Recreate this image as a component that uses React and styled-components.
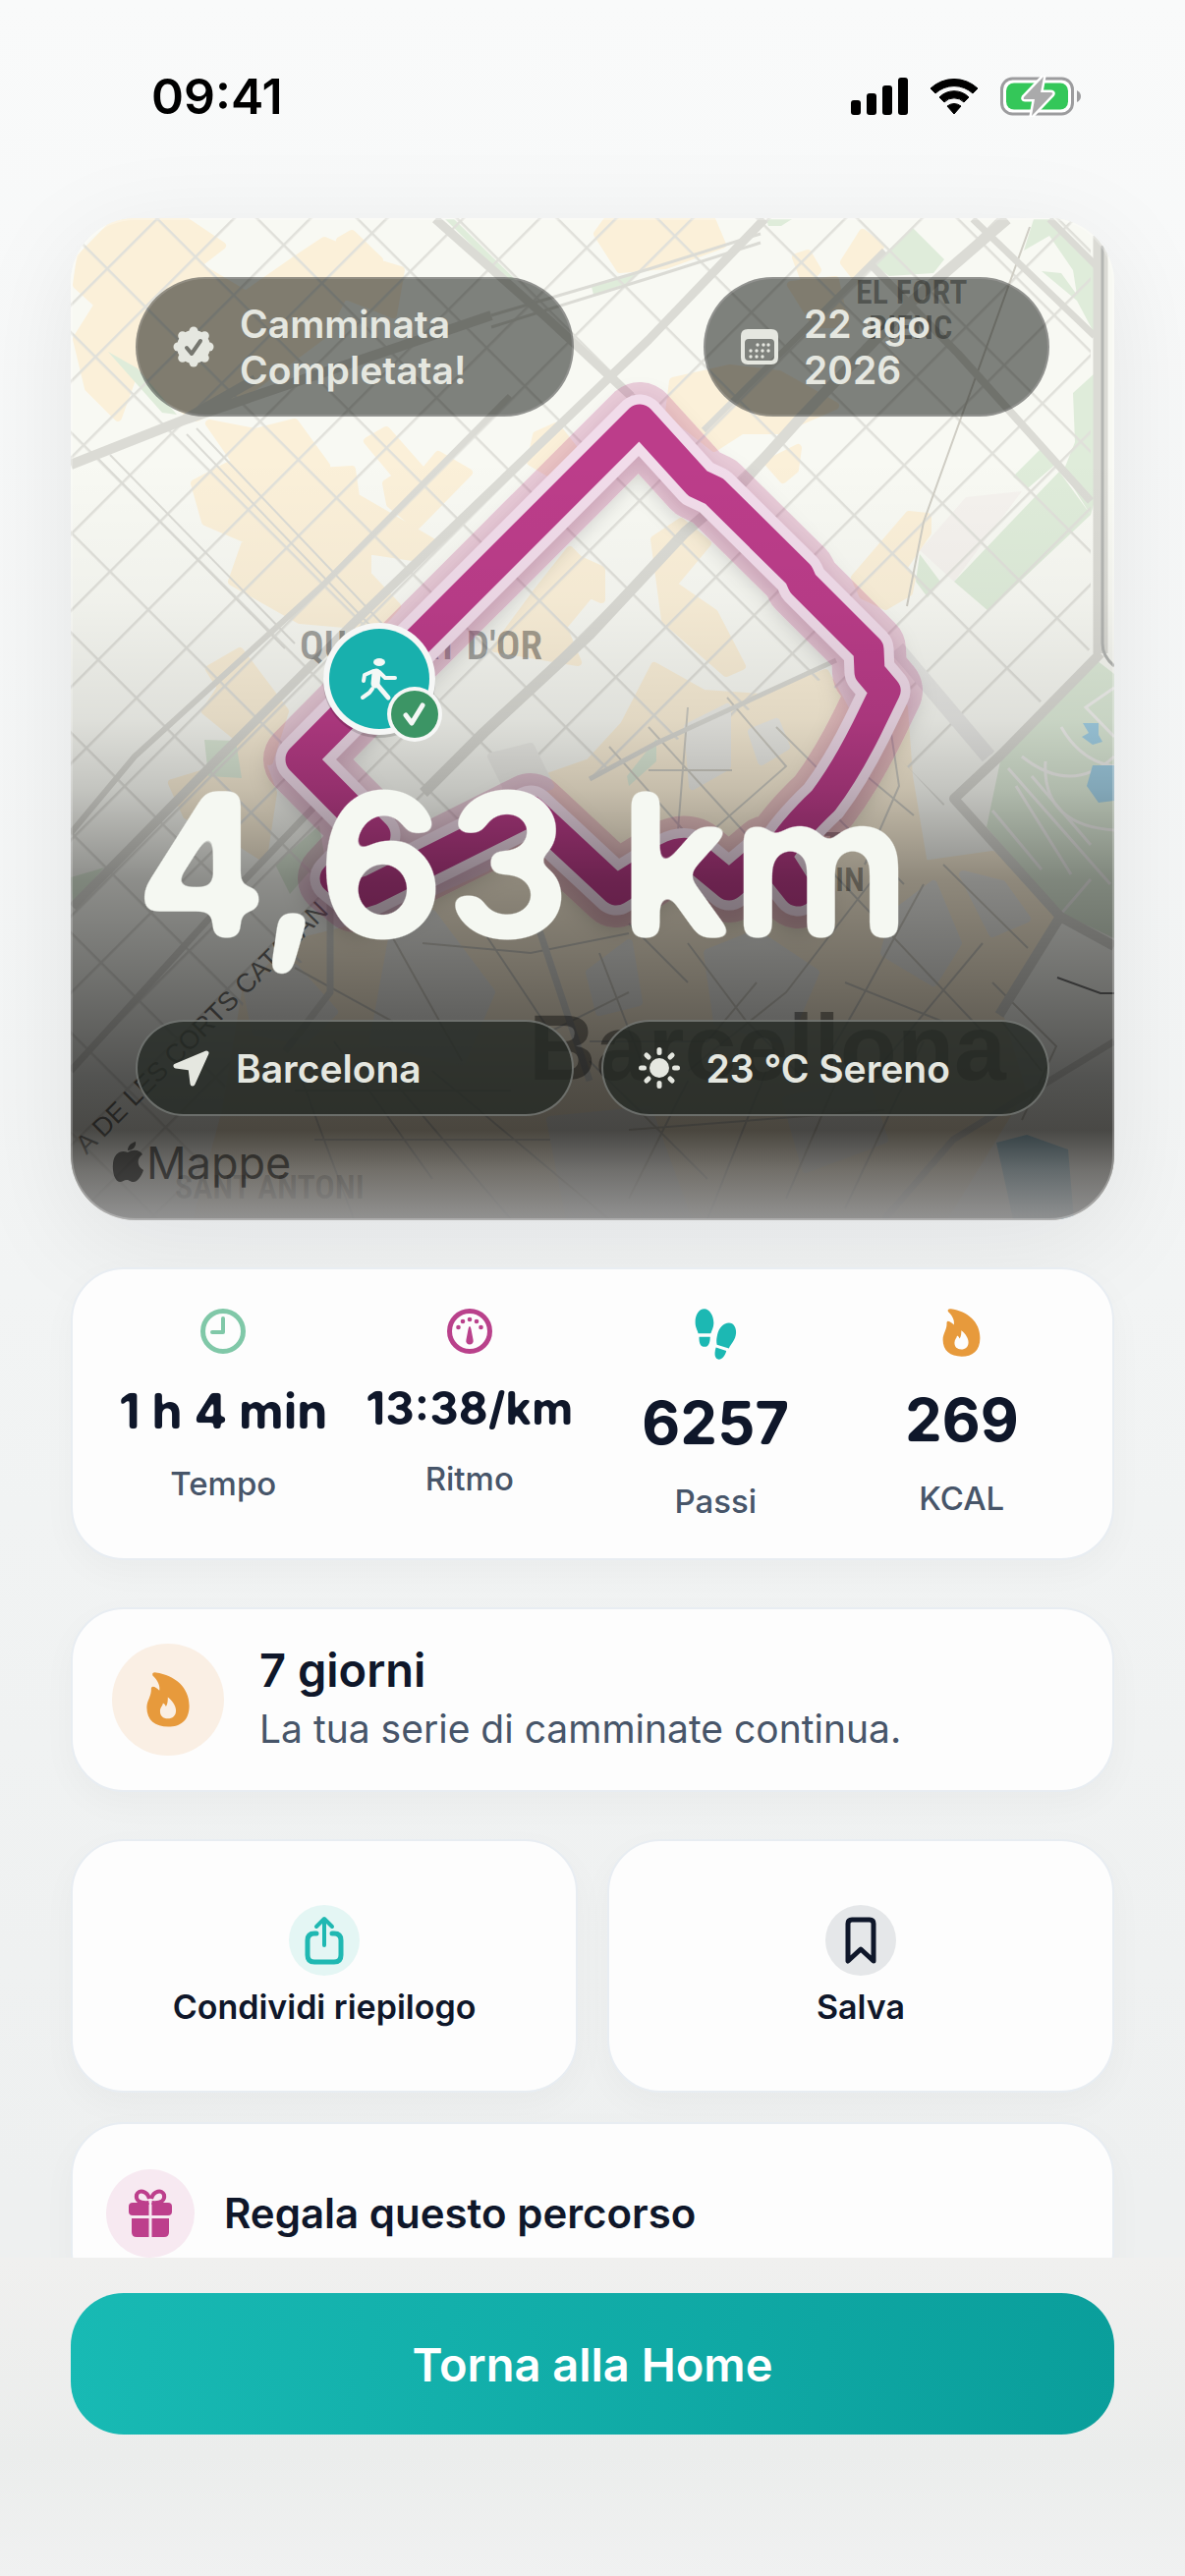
import React from 'react';
import styled, { createGlobalStyle } from 'styled-components';

const GlobalStyle = createGlobalStyle`
    * {
        box-sizing: border-box;
    }

    body {
        margin: 0;
        font-family: Inter, "Liberation Sans", sans-serif;
        color: #0f172a;
        background: #f0f2f2;
    }

    button {
        font-family: inherit;
        color: inherit;
        cursor: pointer;
    }

    h1, h2, p, dl, dt, dd {
        margin: 0;
    }

    svg {
        display: block;
        flex: none;
    }
`;

const Screen = styled.div`
    height: 100vh;
    display: flex;
    flex-direction: column;
    background: linear-gradient(#f9fafa 0%, #f2f4f4 50%, #eef0f0 85%);
`;

const Scroller = styled.main`
    flex: 1;
    min-height: 0;
    overflow: hidden auto;
    scrollbar-width: none;
`;

const StatusBar = styled.header`
    display: flex;
    align-items: center;
    justify-content: space-between;
    height: 64px;
    margin: 66px 106px 92px 154px;
    color: #000;
    font-size: 50px;
    font-weight: 600;
`;

const StatusIcons = styled.div`
    display: flex;
    align-items: center;
    gap: 22px;
`;

const Content = styled.div`
    display: flex;
    flex-direction: column;
    gap: 48px;
    padding: 0 72px 48px;
`;

const HeroShadow = styled.div`
    border-radius: 66px;
    box-shadow: 0 24px 110px rgba(10, 14, 20, 0.08);
`;

const Hero = styled.section`
    position: relative;
    display: flex;
    flex-direction: column;
    height: 1020px;
    padding: 60px 66px 106px;
    border-radius: 66px;
    overflow: hidden;
    background: #f8f9f3;

    &::after {
        content: '';
        position: absolute;
        inset: 0;
        border-radius: 66px;
        border: 2px solid rgba(255, 255, 255, 0.25);
        pointer-events: none;
    }
`;

const MapLayer = styled.svg`
    position: absolute;
    inset: 0;
    width: 100%;
    height: 100%;
`;

const Shade = styled.div`
    position: absolute;
    inset: 0;
    background: linear-gradient(
        rgba(0, 0, 0, 0) 24%,
        rgba(0, 0, 0, 0.03) 38%,
        rgba(0, 0, 0, 0.1) 50%,
        rgba(0, 0, 0, 0.21) 57%,
        rgba(0, 0, 0, 0.43) 66%,
        rgba(0, 0, 0, 0.55) 76%,
        rgba(0, 0, 0, 0.67) 86%,
        rgba(8, 7, 5, 0.73) 91%,
        rgba(84, 83, 81, 0.82) 95%,
        rgba(143, 143, 143, 0.97) 100%
    );
`;

const ChipRow = styled.div`
    position: relative;
    display: grid;
    grid-template-columns: ${({ $columns }) => $columns};
    gap: ${({ $gap }) => $gap};
`;

const Chip = styled.div`
    display: flex;
    align-items: center;
    gap: 26px;
    min-height: 98px;
    padding: 22px 36px;
    border-radius: 71px;
    border: 2px solid ${({ $dark }) => ($dark ? 'rgba(255, 255, 255, 0.3)' : 'rgba(255, 255, 255, 0.14)')};
    background: ${({ $dark }) => ($dark ? 'rgba(38, 42, 37, 0.8)' : 'rgba(0, 4, 0, 0.49)')};
    color: #e5e7e0;
    font-size: 39px;
    line-height: 47px;
    font-weight: 600;
`;

const Distance = styled.h1`
    position: relative;
    margin: auto 0 58px;
    color: #f5f8f2;
    font-size: 201px;
    line-height: 200px;
    font-weight: 600;
    white-space: nowrap;
    -webkit-text-stroke: 3px #f5f8f2;
    filter: url(#roundLarge);
`;

const Card = styled.section`
    border: 2px solid #e8edf2;
    border-radius: 54px;
    background: #fdfdfd;
    box-shadow: 0 12px 36px rgba(15, 23, 42, 0.03);
`;

const StatsCard = styled(Card).attrs({ as: 'dl' })`
    display: grid;
    grid-template-columns: repeat(4, 1fr);
    padding: 40px 28px 38px;
`;

const Stat = styled.div`
    display: flex;
    flex-direction: column;
    align-items: center;
    white-space: nowrap;
`;

const StatLabel = styled.dt`
    order: 2;
    margin-top: 24px;
    color: #475569;
    font-size: 33px;
    line-height: 40px;
    font-weight: 500;
`;

const StatValue = styled.dd`
    margin-top: 28px;
    font-size: ${({ $size }) => $size}px;
    line-height: 1.2;
    font-weight: 700;
    filter: url(#roundSmall);
`;

const StreakCard = styled(Card)`
    display: flex;
    align-items: center;
    gap: 36px;
    padding: 34px 40px;
`;

const IconCircle = styled.span`
    display: flex;
    flex: none;
    align-items: center;
    justify-content: center;
    width: ${({ $size }) => $size}px;
    height: ${({ $size }) => $size}px;
    border-radius: 50%;
    background: ${({ $tint }) => $tint};
`;

const StreakTitle = styled.h2`
    font-size: 47px;
    line-height: 56px;
    font-weight: 600;
`;

const StreakText = styled.p`
    margin-top: 4px;
    color: #475569;
    font-size: 39px;
    line-height: 56px;
`;

const Actions = styled.div`
    display: grid;
    grid-template-columns: 1fr 1fr;
    gap: 30px;
`;

const ActionButton = styled(Card).attrs({ as: 'button', type: 'button' })`
    display: flex;
    flex-direction: column;
    align-items: center;
    justify-content: center;
    gap: 12px;
    height: 258px;
    padding: 0;
    font-size: 34px;
    line-height: 40px;
    font-weight: 600;
`;

const GiftButton = styled(Card).attrs({ as: 'button', type: 'button' })`
    grid-column: 1 / -1;
    display: flex;
    align-items: center;
    gap: 30px;
    padding: 46px 34px;
    font-size: 42px;
    line-height: 52px;
    font-weight: 600;
    text-align: left;
`;

const Footer = styled.footer`
    padding: 36px 72px 144px;
    background: linear-gradient(#f0f0ef, #ebedec 62%, #f0f1f1);
`;

const HomeButton = styled.button`
    width: 100%;
    height: 144px;
    border: 0;
    border-radius: 54px;
    background: linear-gradient(95deg, #18bab4, #0a9e9b);
    color: #fff;
    font-size: 47px;
    font-weight: 600;
`;

const HiddenDefs = styled.svg`
    position: absolute;
    width: 0;
    height: 0;
`;

// softens the corners of the numerals: blur, then sharpen the alpha again
const RoundingFilters = () => (
    <HiddenDefs aria-hidden="true">
        <filter id="roundLarge" x="-5%" y="-10%" width="110%" height="120%" colorInterpolationFilters="sRGB">
            <feGaussianBlur stdDeviation="7" />
            <feColorMatrix values="0 0 0 0 0.96  0 0 0 0 0.973  0 0 0 0 0.95  0 0 0 14 -6.3" />
        </filter>
        <filter id="roundSmall" x="-5%" y="-10%" width="110%" height="120%" colorInterpolationFilters="sRGB">
            <feGaussianBlur stdDeviation="1.6" />
            <feColorMatrix values="0 0 0 0 0.06  0 0 0 0 0.09  0 0 0 0 0.165  0 0 0 4 -1.4" />
        </filter>
    </HiddenDefs>
);

const SignalIcon = () => (
    <svg width="58" height="38" viewBox="0 0 58 38" aria-hidden="true">
        <rect x="0" y="23" width="10" height="15" rx="3" />
        <rect x="16" y="16" width="10" height="22" rx="3" />
        <rect x="32" y="8" width="10" height="30" rx="3" />
        <rect x="48" y="0" width="10" height="38" rx="3" />
    </svg>
);

const WifiIcon = () => (
    <svg width="50" height="38" viewBox="0 0 50 38" aria-hidden="true">
        <path d="M1 11 A35 35 0 0 1 49 11 L44 16 A28 28 0 0 0 6 16Z" stroke="#000" strokeLinejoin="round" />
        <path d="M10 20 A21 21 0 0 1 40 20 L35 25 A14 14 0 0 0 15 25Z" stroke="#000" strokeLinejoin="round" />
        <path d="M18 29 Q25 24 32 29 L25 37Z" stroke="#000" strokeLinejoin="round" />
    </svg>
);

const BatteryIcon = () => (
    <svg width="82" height="42" viewBox="0 0 82 42" aria-hidden="true">
        <rect x="1.5" y="3" width="72" height="36" rx="11" fill="#fff" stroke="#9c9c9e" strokeWidth="3" />
        <rect x="6" y="7.5" width="63" height="27" rx="8" fill="#34c759" />
        <path d="M78 15 Q82 17 82 21 Q82 25 78 27Z" fill="#9c9c9e" />
        <path
            d="M44 1 L24 22 Q23 24 25 24 L35 24 L32 41 L53 19 Q54 17 51 17 L41 17Z"
            fill="#aaaaab"
            stroke="#fff"
            strokeWidth="5"
            strokeLinejoin="round"
            paintOrder="stroke"
        />
    </svg>
);

const SealIcon = () => (
    <svg width="42" height="42" viewBox="-21 -21 42 42" fill="currentColor" aria-hidden="true">
        <circle r="17" />
        {[0, 45, 90, 135, 180, 225, 270, 315].map((angle) => (
            <circle key={angle} cy="-16" r="4.5" transform={`rotate(${angle})`} />
        ))}
        <path d="M-7 1 L-2 7 L7 -6" fill="none" stroke="#767770" strokeWidth="4" strokeLinecap="round" strokeLinejoin="round" />
    </svg>
);

const CALENDAR_DOTS = [
    [17, 16], [23, 16], [28, 16],
    [10, 22], [16, 22], [22, 22], [28, 22],
    [10, 28], [16, 28], [22, 28],
];

const CalendarIcon = () => (
    <svg width="38" height="36" viewBox="0 0 38 36" fill="currentColor" aria-hidden="true">
        <path
            fillRule="evenodd"
            d="M7 0 H31 Q38 0 38 7 V29 Q38 36 31 36 H7 Q0 36 0 29 V7 Q0 0 7 0Z M8 10 Q4 10 4 14 V28 Q4 32 8 32 H30 Q34 32 34 28 V14 Q34 10 30 10Z"
        />
        {CALENDAR_DOTS.map(([cx, cy]) => (
            <circle key={`${cx}-${cy}`} cx={cx} cy={cy} r="1.7" />
        ))}
    </svg>
);

const ArrowIcon = () => (
    <svg width="38" height="38" viewBox="0 0 38 38" fill="currentColor" aria-hidden="true">
        <path d="M34 4 L3 17 L18 19 L20 35Z" stroke="currentColor" strokeWidth="5" strokeLinejoin="round" />
    </svg>
);

const SunIcon = () => (
    <svg width="42" height="42" viewBox="-21 -21 42 42" fill="currentColor" aria-hidden="true">
        <circle r="10" />
        {[0, 45, 90, 135, 180, 225, 270, 315].map((angle) => (
            <rect key={angle} x="-2.5" y="-21" width="5" height="8" rx="2.500" transform={`rotate(${angle})`} />
        ))}
    </svg>
);

const ClockIcon = () => (
    <svg width="46" height="46" viewBox="0 0 46 46" fill="none" stroke="#80c8a8" aria-hidden="true">
        <circle cx="23" cy="23" r="20.5" strokeWidth="5" />
        <path d="M23 10 V24 H12" strokeWidth="4" strokeLinecap="round" strokeLinejoin="round" />
    </svg>
);

const GaugeIcon = () => (
    <svg width="46" height="46" viewBox="0 0 46 46" fill="#b9418b" aria-hidden="true">
        <circle cx="23" cy="23" r="20.5" fill="none" stroke="#b9418b" strokeWidth="5" />
        <circle cx="11.5" cy="19" r="2.3" />
        <circle cx="16" cy="13" r="2.3" />
        <circle cx="23" cy="11" r="2.3" />
        <circle cx="30" cy="13" r="2.3" />
        <circle cx="34.5" cy="19" r="2.3" />
        <path d="M23 18 Q24 18 24.5 21 L26.6 32 A3.7 3.7 0 1 1 19.4 32 L21.5 21 Q22 18 23 18Z" />
    </svg>
);

const StepsIcon = () => (
    <svg width="43" height="52" viewBox="50 53 129 158" fill="#1cb8b3" aria-hidden="true">
        <path d="M79 54 C95 54 108 75 108 98 C108 112 101 122 99 130 H60 C58 120 51 112 51 95 C51 72 62 54 79 54Z" />
        <path d="M63 140 H97 C97 158 92 171 80 171 C67 171 62 160 63 140Z" />
        <path d="M155 97 C170 97 178 112 177 128 C176 150 160 162 155 176 L118 165 C116 155 116 148 119 135 C124 112 138 97 155 97Z" />
        <path d="M115 173 L147 184 C143 200 134 210 124 210 C112 209 108 195 115 173Z" />
    </svg>
);

const FlameIcon = ({ width, height }) => (
    <svg width={width} height={height} viewBox="808 54 117 149" aria-hidden="true">
        <path
            fill="#e79a3c"
            fillRule="evenodd"
            d="M825 63 Q822 54 834 55 C885 62 924 95 924 145 C924 185 900 202 867 202 C832 202 809 185 809 150 C809 130 822 120 821 97 Q822 91 830 94 Q840 99 843 104 C846 90 838 75 825 63Z M866 122 C880 132 888 148 888 158 C888 173 878 180 866 180 C853 180 845 173 845 160 C845 150 852 146 853 138 Q858 140 861 147 C866 140 866 130 866 122Z"
        />
    </svg>
);

const ShareIcon = () => (
    <svg width="40" height="50" viewBox="0 0 40 50" fill="none" stroke="#1fb8b2" strokeWidth="5" strokeLinecap="round" strokeLinejoin="round" aria-hidden="true">
        <path d="M12 18 H10 Q3 18 3 25 V40 Q3 47 10 47 H30 Q37 47 37 40 V25 Q37 18 30 18 H28" />
        <path d="M20 30 V4 M12 11 L20 3 L28 11" strokeWidth="4" />
    </svg>
);

const BookmarkIcon = () => (
    <svg width="32" height="50" viewBox="0 0 32 50" fill="none" stroke="#0f172a" strokeWidth="5" strokeLinejoin="round" aria-hidden="true">
        <path d="M3 46 V8 Q3 4 7 4 H25 Q29 4 29 8 V46 L16 34Z" />
    </svg>
);

const GiftIcon = () => (
    <svg width="44" height="50" viewBox="0 0 44 50" fill="#bd3f8c" aria-hidden="true">
        <path d="M20.5 14 C10 15 7 11 8 6 C10 0 19 2 21 10 M23.5 14 C34 15 37 11 36 6 C34 0 25 2 23 10" fill="none" stroke="#bd3f8c" strokeWidth="4" />
        <path d="M4 14 H20.5 V27 H4 Q0 27 0 23 V18 Q0 14 4 14Z" />
        <path d="M23.5 14 H40 Q44 14 44 18 V23 Q44 27 40 27 H23.5Z" />
        <path d="M3 30 H20.5 V49 H8 Q3 49 3 44Z" />
        <path d="M23.5 30 H41 V44 Q41 49 36 49 H23.5Z" />
    </svg>
);

const ROUTE =
    'M386 692 L306 773 L382 850 L341 894 L362 911 L378 906 L540 825 L627 906 L680 873 Q698 864 708 873 L742 901 L781 868 L812 907 L790 872 Q806 845 838 815 Q860 786 882 742 L901 703 L885 684 L884 661 L817 594 L813 585 L727 500 L710 492 L651 427 Z';

const BUILT_UP = [
    'M82 262 L117 226 L186 223 L226 250 L200 270 L250 300 L300 265 L330 245 L385 268 L408 275 L400 320 L350 300 L330 340 L250 400 L200 425 L160 400 L140 370 L120 425 L90 395 L78 345 L100 310 L78 290Z',
    'M213 431 L260 440 L300 430 L332 474 L309 481 L358 478 L362 506 L393 524 L442 553 L420 567 L374 560 L374 585 L404 617 L385 638 L305 631 L236 592 L251 549 L209 531 L198 492 L240 470Z',
    'M374 449 L393 438 L431 481 L446 463 L477 481 L424 535 L397 513 L393 492 L404 485Z',
    'M346 245 L358 238 L386 265 L380 275Z',
    'M546 443 L566 434 L588 462 L560 482 L540 470Z',
    'M546 603 L580 560 L611 592 L573 638 L588 674 L504 660Z',
    'M213 681 L244 663 L290 724 L274 775 L236 746 L209 724 L225 700Z',
    'M175 797 L221 783 L255 745 L278 807 L268 873 L232 850 L190 830Z',
    'M619 223 L724 223 L735 249 L677 270 L631 274 L608 238Z',
    'M810 262 L822 258 L832 275 L820 288Z',
    'M859 267 L878 237 L896 251 L870 281Z',
    'M805 290 L850 285 L860 330 L830 330Z',
    'M685 388 L743 375 L793 381 L850 413 L793 438 L755 438 L727 456 L681 420Z',
    'M782 471 L812 456 L809 478 L797 488Z',
    'M666 549 L693 531 L720 553 L685 595 L727 624 L755 678 L739 685 L677 631Z',
    'M870 588 L925 524 L944 526 L944 542 L917 581 L928 588 L925 603 L901 617 L878 606Z',
    'M590 570 L612 580 L612 610 L590 600Z',
    'M600 776 L635 738 L666 678 L716 706 L774 710 L840 685 L870 740 L920 720 L925 790 L940 880 L1010 870 L1050 900 L1079 933 L1017 1033 L1040 1110 L960 1241 L200 1241 L230 1130 L250 1010 L300 960 L400 935 L500 890 L560 790Z',
];

const OPEN_BLOCKS = [
    'M250 1000 L300 985 L340 1030 L310 1060 L260 1050Z',
    'M400 950 L440 930 L500 1010 L470 1080 L380 1060Z',
    'M720 970 L770 950 L830 990 L800 1060 L730 1040Z',
    'M910 930 L950 900 L975 960 L950 1000 L900 970Z',
    'M700 740 L740 720 L740 780 L705 800Z',
    'M765 745 L790 735 L800 760 L775 775Z',
    'M500 770 L540 760 L560 800 L520 810Z',
    'M600 990 L640 960 L650 1020 L610 1030Z',
    'M980 890 L1020 900 L1045 935 L1010 950Z',
    'M560 1140 L660 1130 L700 1241 L580 1241Z',
    'M800 1120 L880 1100 L900 1160 L820 1190Z',
];

const PARKS = [
    'M888 269 L929 232 L961 264 L950 278 L905 281Z',
    'M1052 223 L1068 223 L1114 271 L1114 340 L1096 306 L1060 276 L1080 278 L1096 300 L1092 275 L1068 240 L1042 255Z',
    'M1114 380 L1092 400 L1094 450 L1082 480 L1110 524 L1114 510Z',
    'M971 592 L1054 505 L1078 480 L1110 524 L1006 622Z',
    'M1031 485 L1060 456 L1075 472 L1046 497Z',
    'M936 564 L957 592 L944 608 L932 592Z',
    'M453 223 L462 223 L525 285 L516 285Z',
    'M110 358 L140 375 L180 422 L165 420Z',
    'M602 292 L655 274 L640 288 L604 300Z',
    'M780 223 L806 223 L795 230 L782 230Z',
    'M208 753 L240 754 L246 792 L212 790Z',
    'M280 880 L325 840 L330 870 L295 910Z',
    'M72 893 L106 883 L74 920Z',
    'M638 790 L668 752 L668 775 L640 800Z',
    'M1116 672 L1134 686 L1134 955 L1081 930 L1004 842 L1019 770Z',
];

const AVENUES = [
    { d: 'M778 223 L660 346 L366 628 L224 770 L74 923', w: 9 },
    { d: 'M900 255 L716 438 M519 403 L328 596 L137 770 L72 848', w: 6 },
    { d: 'M443 223 L557 324 L642 403', w: 9 },
    { d: 'M72 473 L186 428 L500 321 M186 428 L260 386', w: 10 },
    { d: 'M500 321 L660 274 L774 238 M500 333 L664 282 L774 247', w: 3 },
    { d: 'M1025 223 L929 306 L816 424 L755 492 L697 542 L600 646 L492 746 L431 807', w: 11 },
    { d: 'M886 269 L975 360 L1110 510', w: 8 },
    { d: 'M990 223 L1114 342 M1068 223 L1116 271', w: 7 },
    { d: 'M1120 240 V665', w: 15 },
    { d: 'M1120 665 L1017 770 L971 813 L1079 933 L1134 963 M1079 933 L1017 1033', w: 10 },
    { d: 'M851 672 L669 756 L600 793', w: 5 },
    { d: 'M100 467 L290 660 M112 463 L300 655 M190 442 L380 640 M200 436 L390 636', w: 2 },
    { d: 'M72 1090 L240 905 L340 800', w: 7 },
    { d: 'M336 900 L336 1010 L290 1070 M540 920 L600 1100 M1134 1060 L970 1160 L900 1241', w: 7 },
];

const LANES =
    'M1048 231 L940 531 L923 617 M300 985 L400 1040 M400 955 L470 1080 M430 960 L540 970 L640 950 M480 930 L560 1050 L640 1010 M620 760 L700 850 M660 740 L760 850 M700 720 L690 845 M740 710 L800 780 L720 850 M660 784 L745 784 M790 740 L850 800 M900 700 L915 800 L880 880 M870 780 L930 830 M850 830 L920 900 M830 870 L1000 1050 M900 880 L800 1010 L700 1090 M940 900 L880 1010 L840 1080 M860 1000 L960 1040 M960 880 L1046 965 M1000 960 L900 1080 M700 960 L760 1040 L820 1100 M770 1000 L720 1060 L600 1060 M610 970 L660 1100 M640 940 L700 1000 M600 1080 L720 1200 M400 1100 L520 1241 M440 1090 L620 1241 M340 1060 L440 1200 M300 1080 L360 1241 M700 1100 L640 1220 M780 1090 L720 1241 M860 1080 L800 1220 M940 1060 L860 1230 M300 1110 H520 M320 1160 H560 M640 1150 L900 1130 M1010 1000 L1075 1065 L1040 1140 M1020 1040 L1060 1090';

const PARK_PATHS =
    'M1026 782 L1130 900 M1040 770 Q1090 810 1134 770 M1064 775 Q1060 840 1134 845 M1034 800 L1090 890 M1050 790 L1110 860 M1080 740 Q1100 775 1134 780 M1134 700 L1105 720 L1134 750 M1080 930 L1110 895 M1010 825 L1060 885';

function WalkMap() {
    return (
        <MapLayer viewBox="72 222 1062 1020" preserveAspectRatio="xMidYMid slice" aria-hidden="true">
            <defs>
                <pattern id="blocks" width="55" height="72" patternUnits="userSpaceOnUse" patternTransform="translate(112 580) rotate(45)">
                    <path d="M0 0 H55 M0 0 V72" stroke="#e0e0da" strokeWidth="5" />
                </pattern>
                <filter id="routeShadow" x="-20%" y="-20%" width="140%" height="140%">
                    <feDropShadow dx="0" dy="10" stdDeviation="10" floodColor="#000" floodOpacity="0.22" />
                </filter>
            </defs>
            <rect x="72" y="222" width="1062" height="1020" fill="#f8f9f3" />
            <path d="M936 560 L983 506 L1040 500 L971 592Z" fill="#f5f2ee" />
            <path d={BUILT_UP.join(' ')} fill="#fbf0d9" stroke="#fbf0d9" strokeWidth="8" strokeLinejoin="round" />
            <path d={PARKS.join(' ')} fill="#dfecda" />
            <path d="M72 222 H1110 V660 L960 820 L840 690 L600 790 L400 930 L250 1010 L200 1241 H72Z" fill="url(#blocks)" />
            <path d={OPEN_BLOCKS.join(' ')} fill="#efefea" stroke="#efefea" strokeWidth="8" strokeLinejoin="round" />
            <path d={LANES} fill="none" stroke="#cfcdc4" strokeWidth="2" />
            <path d={PARK_PATHS} fill="none" stroke="#f3f3f0" strokeWidth="3" />
            {AVENUES.map(({ d, w }) => (
                <path key={d} d={d} fill="none" stroke="#dbdbd5" strokeWidth={w} strokeLinejoin="round" />
            ))}
            <path d="M913 660 L1006 770" stroke="#eaeae7" strokeWidth="16" />
            <path d="M1122 250 V655 Q1122 668 1134 678" fill="none" stroke="#b4b6b3" strokeWidth="3" />
            <path d="M1076 995 L1120 1011 H1134" fill="none" stroke="#777" strokeWidth="2" />
            <path
                d="M1106 800 L1112 779 H1134 V815 L1118 817Z M1102 736 H1118 V748 L1122 755 L1112 758 L1101 750 L1108 746Z M1014 1163 L1045 1155 L1087 1170 L1093 1241 H1031Z"
                fill="#a5d3e8"
            />
            <g fill="#000" fillOpacity="0.36" fontFamily='"Liberation Sans Narrow", "Roboto Condensed", Roboto, sans-serif' fontWeight="600">
                <g fontSize="34">
                    <text x="871" y="309">EL FORT</text>
                    <text x="884" y="345">PIENC</text>
                    <text x="838" y="871">T</text>
                    <text x="850" y="907">IN</text>
                    <text x="178" y="1220">SANT ANTONI</text>
                </g>
                <text x="305" y="671" fontSize="41">QUADRAT D&apos;OR</text>
            </g>
            <text transform="translate(88 1176) rotate(-45)" fontFamily='"Liberation Sans", sans-serif' fontSize="27" fillOpacity="0.55">
                A DE LES CORTS CATALAN
            </text>
            <text x="538" y="1099" fontFamily='"Liberation Sans", sans-serif' fontWeight="700" fontSize="95" fill="#000" fillOpacity="0.4">
                Barcellona
            </text>
            <g filter="url(#routeShadow)" fill="none" strokeLinejoin="round" strokeLinecap="round">
                <path d={ROUTE} stroke="#b93c86" strokeOpacity="0.24" strokeWidth="76" />
                <path d={ROUTE} stroke="#f1dcea" strokeWidth="51" />
            </g>
            <path d={ROUTE} fill="none" stroke="#bc3d8a" strokeWidth="31" strokeLinejoin="round" />
        </MapLayer>
    );
}

function WalkMarker() {
    return (
        <MapLayer viewBox="72 222 1062 1020" preserveAspectRatio="xMidYMid slice" aria-hidden="true">
            <circle cx="386" cy="694" r="57" fill="#000" opacity="0.15" />
            <circle cx="386" cy="691" r="57" fill="#f6f7f6" />
            <circle cx="386" cy="691" r="51" fill="#18b0ad" />
            <g fill="none" stroke="#f4f8f6" strokeLinecap="round" strokeLinejoin="round">
                <ellipse cx="386" cy="674" rx="6" ry="4" fill="#f4f8f6" stroke="none" />
                <path d="M383 685 L382 696" strokeWidth="9" />
                <path d="M380 683 L371 687 L370 693" strokeWidth="4" />
                <path d="M386 684 L392 690 L402 690" strokeWidth="4" />
                <path d="M384 697 L395 710" strokeWidth="5" />
                <path d="M379 701 L376 705 L369 710" strokeWidth="4" />
            </g>
            <circle cx="422" cy="727" r="28" fill="#f6f7f6" />
            <circle cx="422" cy="727" r="24" fill="#3c9565" />
            <path d="M413 728 L419 736 L430 718" fill="none" stroke="#f4f8f6" strokeWidth="5" strokeLinecap="round" strokeLinejoin="round" />
            <g fill="#000" fillOpacity="0.5">
                <path d="M130 1173 C136 1169 143 1171 145 1175 C139 1179 139 1187 146 1191 C144 1197 140 1203 136 1203 C132 1203 132 1201 129 1201 C126 1201 125 1203 122 1203 C117 1203 114 1193 115 1184 C116 1174 123 1170 130 1173Z M130 1171 C130 1166 134 1163 138 1162 C139 1167 135 1171 130 1171Z" />
                <text x="149" y="1200" fontFamily="Inter, sans-serif" fontSize="45">Mappe</text>
            </g>
        </MapLayer>
    );
}

const stats = [
    { icon: <ClockIcon />, value: '1 h 4 min', label: 'Tempo', size: 50 },
    { icon: <GaugeIcon />, value: '13:38/km', label: 'Ritmo', size: 46 },
    { icon: <StepsIcon />, value: '6257', label: 'Passi', size: 60 },
    { icon: <FlameIcon width={39} height={49} />, value: '269', label: 'KCAL', size: 60 },
];

function App() {
    return (
        <Screen>
            <GlobalStyle />
            <RoundingFilters />
            <Scroller>
                <StatusBar>
                    <time>09:41</time>
                    <StatusIcons>
                        <SignalIcon />
                        <WifiIcon />
                        <BatteryIcon />
                    </StatusIcons>
                </StatusBar>
                <Content>
                    <HeroShadow>
                        <Hero>
                            <WalkMap />
                            <Shade />
                            <WalkMarker />
                            <ChipRow $columns="19fr 15fr" $gap="132px">
                                <Chip>
                                    <SealIcon />
                                    Camminata Completata!
                                </Chip>
                                <Chip>
                                    <CalendarIcon />
                                    <span>22 ago<br />2026</span>
                                </Chip>
                            </ChipRow>
                            <Distance>4,63 km</Distance>
                            <ChipRow $columns="49fr 50fr" $gap="28px">
                                <Chip $dark>
                                    <ArrowIcon />
                                    Barcelona
                                </Chip>
                                <Chip $dark>
                                    <SunIcon />
                                    23 °C Sereno
                                </Chip>
                            </ChipRow>
                        </Hero>
                    </HeroShadow>
                    <StatsCard>
                        {stats.map((stat) => (
                            <Stat key={stat.label}>
                                {stat.icon}
                                <StatLabel>{stat.label}</StatLabel>
                                <StatValue $size={stat.size}>{stat.value}</StatValue>
                            </Stat>
                        ))}
                    </StatsCard>
                    <StreakCard>
                        <IconCircle $size={114} $tint="#faefe4">
                            <FlameIcon width={44} height={56} />
                        </IconCircle>
                        <div>
                            <StreakTitle>7 giorni</StreakTitle>
                            <StreakText>La tua serie di camminate continua.</StreakText>
                        </div>
                    </StreakCard>
                    <Actions>
                        <ActionButton>
                            <IconCircle $size={72} $tint="#e4f6f4">
                                <ShareIcon />
                            </IconCircle>
                            Condividi riepilogo
                        </ActionButton>
                        <ActionButton>
                            <IconCircle $size={72} $tint="#e5e7e9">
                                <BookmarkIcon />
                            </IconCircle>
                            Salva
                        </ActionButton>
                        <GiftButton>
                            <IconCircle $size={90} $tint="#f7e9f1">
                                <GiftIcon />
                            </IconCircle>
                            Regala questo percorso
                        </GiftButton>
                    </Actions>
                </Content>
            </Scroller>
            <Footer>
                <HomeButton type="button">Torna alla Home</HomeButton>
            </Footer>
        </Screen>
    );
}

export default App;
